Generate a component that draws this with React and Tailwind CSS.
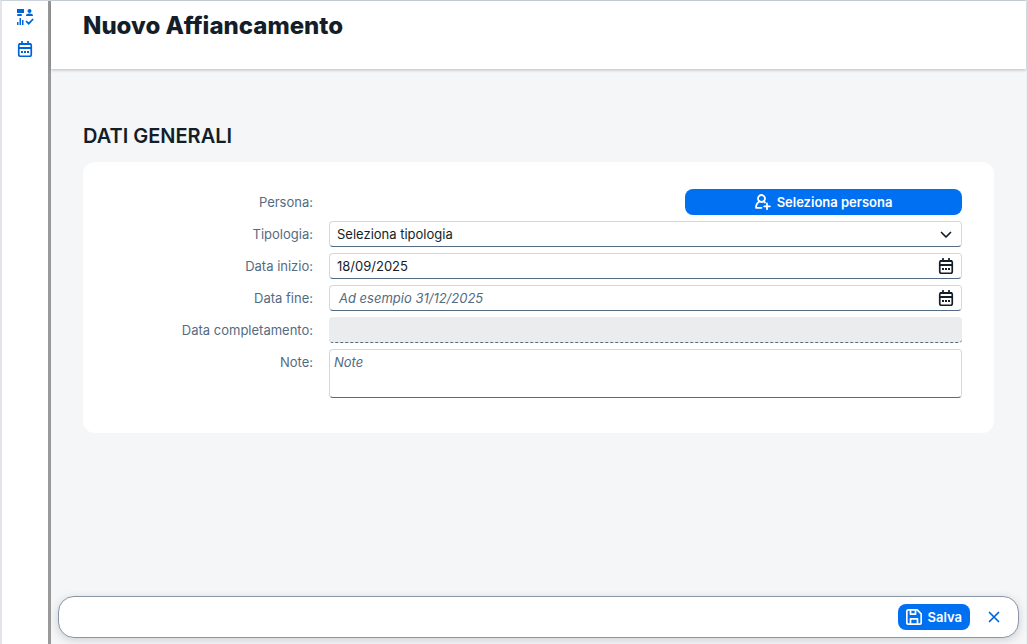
import { useState } from 'react';

function DashboardIcon({ className }) {
  return (
    <svg viewBox="0 0 18 18" className={className} fill="currentColor" aria-hidden="true">
      <rect x="1" y="0" width="7" height="4" />
      <rect x="1" y="5" width="5" height="2" rx="1" />
      <circle cx="13.500" cy="2" r="2" />
      <path d="M10 7c0-1.600 1.200-2.400 3.500-2.400S17 5.400 17 7z" />
      <path d="M1.750 13v3M4.250 9v7M6.750 11v5" stroke="currentColor" strokeWidth="1.500" />
      <path d="M10.500 12.500l2.200 2.200 4-4.200" fill="none" stroke="currentColor" strokeWidth="1.700" strokeLinecap="round" />
    </svg>
  );
}

function CalendarIcon({ className }) {
  return (
    <svg viewBox="0 0 16 16" className={className} fill="none" stroke="currentColor" aria-hidden="true">
      <rect x="1.750" y="2.750" width="12.500" height="12.500" rx="1.500" strokeWidth="1.700" />
      <path d="M2 3h12M2 7h12" strokeWidth="2" />
      <path d="M5 0v4M11 0v4" strokeWidth="1.700" />
      <path d="M4 11h2M7 11h2M10 11h2" strokeWidth="2" />
    </svg>
  );
}

function AddPersonIcon({ className }) {
  return (
    <svg viewBox="0 0 16 16" className={className} fill="none" stroke="currentColor" strokeWidth="1.800" strokeLinecap="round" strokeLinejoin="round" aria-hidden="true">
      <circle cx="6.500" cy="4.500" r="3.500" />
      <path d="M4.500 7.500C2.300 8.700 1 10.800 1 13.800h5.500M8.500 7.500l1.500 1" />
      <path d="M12 9.500v5.700M9.200 12.300h5.700" />
    </svg>
  );
}

function SaveIcon({ className }) {
  return (
    <svg viewBox="0 0 16 16" className={className} fill="none" stroke="currentColor" strokeWidth="1.700" strokeLinejoin="round" aria-hidden="true">
      <path d="M2.500.8h8.700l4 4v8.700a1.700 1.700 0 0 1-1.700 1.700h-11A1.700 1.700 0 0 1 .8 13.500v-11A1.700 1.700 0 0 1 2.500.8z" />
      <path d="M4.500 1v4.200h5V1M4.500 15v-5.200h7V15" />
    </svg>
  );
}

function ChevronIcon({ className }) {
  return (
    <svg viewBox="0 0 16 16" className={className} fill="none" stroke="currentColor" strokeWidth="1.700" strokeLinecap="round" strokeLinejoin="round" aria-hidden="true">
      <path d="M3.500 6.500l4.500 4.500L12.500 6.500" />
    </svg>
  );
}

function CloseIcon({ className }) {
  return (
    <svg viewBox="0 0 16 16" className={className} fill="none" stroke="currentColor" strokeWidth="1.700" strokeLinecap="round" aria-hidden="true">
      <path d="M3.500 3.500l9 9M12.500 3.500l-9 9" />
    </svg>
  );
}

const fieldBox =
  'flex h-[26px] items-center rounded-sm border border-[#d5d8db] border-b-[#556b82] bg-white';

function Row({ label, htmlFor, children }) {
  return (
    <div className="grid grid-cols-[198px_1fr] items-start gap-4">
      <label htmlFor={htmlFor} className="text-right leading-[26px] text-[#556b82]">
        {label}:
      </label>
      {children}
    </div>
  );
}

function DateField({ id, value, onChange, placeholder }) {
  return (
    <div className={fieldBox}>
      <input
        id={id}
        type="text"
        value={value}
        onChange={(e) => onChange(e.target.value)}
        placeholder={placeholder}
        className="h-6 min-w-0 flex-1 px-[7px] outline-none placeholder:px-[2px] placeholder:text-[#556b82] placeholder:italic"
      />
      <button type="button" aria-label="Apri calendario" className="px-[7px]">
        <CalendarIcon className="size-4" />
      </button>
    </div>
  );
}

export default function App() {
  const [tipologia, setTipologia] = useState('');
  const [dataInizio, setDataInizio] = useState('18/09/2025');
  const [dataFine, setDataFine] = useState('');
  const [note, setNote] = useState('');

  return (
    <div className="flex h-screen border-t border-r border-l-2 border-t-[#cdd3dc] border-r-[#eceef1] border-l-[#e1e5ea] bg-[#f5f6f7] font-['Inter','Noto_Sans',sans-serif] text-[13px] leading-5 text-[#131e29]">
      {/* Sidebar */}
      <nav className="flex w-[49px] shrink-0 flex-col items-center gap-[14px] border-r-[3px] border-[#999999] bg-white pt-2 text-[#0064d9]">
        <a href="#dashboard" aria-label="Dashboard">
          <DashboardIcon className="size-[18px]" />
        </a>
        <a href="#calendario" aria-label="Calendario">
          <CalendarIcon className="size-4" />
        </a>
      </nav>

      <div className="flex min-w-0 flex-1 flex-col">
        <header className="h-[68px] shrink-0 bg-white px-8 pt-[9px] shadow-[0_1px_3px_rgba(34,53,72,0.3)]">
          <h1 className="text-[24px] leading-8 font-extrabold">Nuovo Affiancamento</h1>
        </header>

        <main className="min-h-0 flex-1 overflow-auto px-8 pt-[55px]">
          <h2 className="text-[20px] leading-6 font-semibold">DATI GENERALI</h2>

          <form className="mt-[14px] flex flex-col gap-[6px] rounded-xl bg-white px-8 pt-[27px] pb-[35px]">
            <Row label="Persona" htmlFor="persona">
              <button
                id="persona"
                type="button"
                className="flex h-[26px] w-7/16 items-center justify-center gap-[6px] justify-self-end rounded-lg bg-[#0070f2] leading-[26px] font-semibold text-white"
              >
                <AddPersonIcon className="size-4" />
                Seleziona persona
              </button>
            </Row>

            <Row label="Tipologia" htmlFor="tipologia">
              <div className="grid items-center">
                <select
                  id="tipologia"
                  value={tipologia}
                  onChange={(e) => setTipologia(e.target.value)}
                  className={`${fieldBox} col-start-1 row-start-1 w-full appearance-none px-[7px] leading-6 outline-none`}
                >
                  <option value="">Seleziona tipologia</option>
                </select>
                <ChevronIcon className="pointer-events-none col-start-1 row-start-1 mr-2 size-4 justify-self-end" />
              </div>
            </Row>

            <Row label="Data inizio" htmlFor="data-inizio">
              <DateField id="data-inizio" value={dataInizio} onChange={setDataInizio} />
            </Row>

            <Row label="Data fine" htmlFor="data-fine">
              <DateField
                id="data-fine"
                value={dataFine}
                onChange={setDataFine}
                placeholder="Ad esempio 31/12/2025"
              />
            </Row>

            <Row label="Data completamento" htmlFor="data-completamento">
              <input
                id="data-completamento"
                type="text"
                readOnly
                className="h-[26px] w-full rounded-sm border-b border-dashed border-[#556b82] bg-[#eaecee] px-[7px] outline-none"
              />
            </Row>

            <Row label="Note" htmlFor="note">
              <textarea
                id="note"
                value={note}
                onChange={(e) => setNote(e.target.value)}
                placeholder="Note"
                className="block h-[49px] w-full resize-none rounded-sm border border-[#d5d8db] border-b-[#556b82] bg-white px-1 py-[2px] outline-none placeholder:text-[#556b82] placeholder:italic"
              />
            </Row>
          </form>
        </main>

        {/* Footer toolbar */}
        <footer className="mx-[7px] mb-[6px] flex h-[42px] shrink-0 items-center justify-end gap-4 rounded-2xl border border-[#8a96a3] bg-white pr-4 shadow-[0_2px_8px_rgba(34,53,72,0.2)]">
          <button
            type="button"
            className="flex h-[26px] items-center gap-[6px] rounded-lg bg-[#0070f2] px-2 leading-[26px] font-semibold text-white"
          >
            <SaveIcon className="size-4" />
            Salva
          </button>
          <button type="button" aria-label="Chiudi" className="text-[#0064d9]">
            <CloseIcon className="size-4" />
          </button>
        </footer>
      </div>
    </div>
  );
}
